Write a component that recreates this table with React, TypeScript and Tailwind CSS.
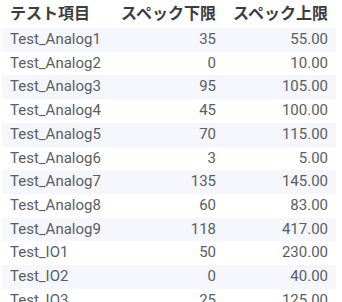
const rows = [
  { name: "Test_Analog1", low: "35", high: "55.00" },
  { name: "Test_Analog2", low: "0", high: "10.00" },
  { name: "Test_Analog3", low: "95", high: "105.00" },
  { name: "Test_Analog4", low: "45", high: "100.00" },
  { name: "Test_Analog5", low: "70", high: "115.00" },
  { name: "Test_Analog6", low: "3", high: "5.00" },
  { name: "Test_Analog7", low: "135", high: "145.00" },
  { name: "Test_Analog8", low: "60", high: "83.00" },
  { name: "Test_Analog9", low: "118", high: "417.00" },
  { name: "Test_IO1", low: "50", high: "230.00" },
  { name: "Test_IO2", low: "0", high: "40.00" },
  { name: "Test_IO3", low: "25", high: "125.00" },
];

export default function App() {
  return (
    <div className="h-screen overflow-hidden bg-white font-['Roboto','Noto_Sans_CJK_JP',sans-serif]">
      <table className="ml-[2px] w-[334px] table-fixed border-collapse">
        <colgroup>
          <col className="w-[110px]" />
          <col className="w-[112px]" />
          <col className="w-[112px]" />
        </colgroup>
        <thead>
          {/* ヘッダー */}
          <tr className="h-[28px] text-[16px] font-bold text-[#3d3d3d]">
            <th className="px-2 pb-[1px] text-left leading-[20px]">テスト項目</th>
            <th className="px-2 pb-[1px] text-right leading-[20px]">スペック下限</th>
            <th className="px-2 pb-[1px] text-right leading-[20px]">スペック上限</th>
          </tr>
        </thead>
        <tbody className="text-[15px] text-[#5a5d63]">
          {rows.map((r, i) => (
            <tr key={r.name} className={`h-[23.7px] ${i % 2 === 0 ? "bg-[#f5f7fc]" : "bg-white"}`}>
              <td className="px-2 py-0 leading-[23.7px]">{r.name}</td>
              <td className="px-2 py-0 text-right leading-[23.7px]">{r.low}</td>
              <td className="px-2 py-0 text-right leading-[23.7px]">{r.high}</td>
            </tr>
          ))}
        </tbody>
      </table>
    </div>
  );
}
